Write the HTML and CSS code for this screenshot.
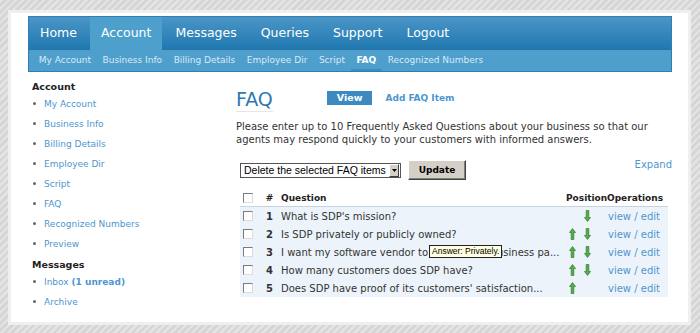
FILE: index.html
```html
<!DOCTYPE html>
<html lang="en">
<head>
  <meta charset="UTF-8">
  <title>FAQ</title>
  <link rel="stylesheet" href="styles.css">
</head>
<body>
  <div class="panel">
    <div class="nav">
      <ul class="menu">
        <li>Home</li>
        <li class="active">Account</li>
        <li>Messages</li>
        <li>Queries</li>
        <li>Support</li>
        <li>Logout</li>
      </ul>
      <ul class="submenu">
        <li>My Account</li>
        <li>Business Info</li>
        <li>Billing Details</li>
        <li>Employee Dir</li>
        <li>Script</li>
        <li class="active">FAQ</li>
        <li>Recognized Numbers</li>
      </ul>
    </div>

    <div class="layout">
      <div class="sidebar">
        <h3>Account</h3>
        <ul>
          <li><a href="#">My Account</a></li>
          <li><a href="#">Business Info</a></li>
          <li><a href="#">Billing Details</a></li>
          <li><a href="#">Employee Dir</a></li>
          <li><a href="#">Script</a></li>
          <li><a href="#">FAQ</a></li>
          <li><a href="#">Recognized Numbers</a></li>
          <li><a href="#">Preview</a></li>
        </ul>
        <h3 class="second">Messages</h3>
        <ul>
          <li><a href="#">Inbox <b>(1 unread)</b></a></li>
          <li><a href="#">Archive</a></li>
        </ul>
      </div>

      <div class="content">
        <div class="title-row">
          <h1>FAQ</h1>
          <span class="tab">View</span>
          <a class="add" href="#">Add FAQ Item</a>
        </div>
        <p class="intro">Please enter up to 10 Frequently Asked Questions about your business so that our agents may respond quickly to your customers with informed answers.</p>

        <div class="toolbar">
          <div class="select">
            <span class="select-text">Delete the selected FAQ items</span>
            <span class="select-arrow"><svg width="5" height="3" viewBox="0 0 5 3"><polygon points="0,0 5,0 2.5,3" fill="#000"/></svg></span>
          </div>
          <button class="update">Update</button>
          <a class="expand" href="#">Expand</a>
        </div>

        <table class="faq">
          <colgroup>
            <col class="c-check">
            <col class="c-num">
            <col class="c-question">
            <col class="c-pos">
            <col class="c-ops">
          </colgroup>
          <thead>
            <tr>
              <th class="check"><input type="checkbox"></th>
              <th class="num">#</th>
              <th class="question">Question</th>
              <th class="pos-head">Position</th>
              <th>Operations</th>
            </tr>
          </thead>
          <tbody>
            <tr>
              <td class="check"><input type="checkbox"></td>
              <td class="num">1</td>
              <td class="question">What is SDP's mission?</td>
              <td class="pos"><span class="arrows"><span class="slot"></span><svg class="arrow" width="7" height="12" viewBox="0 0 7 12"><polygon points="2.2,0.5 4.8,0.5 4.8,7.5 6.5,7.5 3.5,11.5 0.5,7.5 2.2,7.5"/></svg></span></td>
              <td class="ops"><a href="#">view</a> / <a href="#">edit</a></td>
            </tr>
            <tr>
              <td class="check"><input type="checkbox"></td>
              <td class="num">2</td>
              <td class="question">Is SDP privately or publicly owned?</td>
              <td class="pos"><span class="arrows"><svg class="arrow" width="7" height="12" viewBox="0 0 7 12"><polygon points="3.5,0.5 6.5,4.5 4.8,4.5 4.8,11.5 2.2,11.5 2.2,4.5 0.5,4.5"/></svg><svg class="arrow" width="7" height="12" viewBox="0 0 7 12"><polygon points="2.2,0.5 4.8,0.5 4.8,7.5 6.5,7.5 3.5,11.5 0.5,7.5 2.2,7.5"/></svg></span></td>
              <td class="ops"><a href="#">view</a> / <a href="#">edit</a></td>
            </tr>
            <tr>
              <td class="check"><input type="checkbox"></td>
              <td class="num">3</td>
              <td class="question has-tip">I want my software vendor to contact my business pa...<span class="tip">Answer: Privately.</span></td>
              <td class="pos"><span class="arrows"><svg class="arrow" width="7" height="12" viewBox="0 0 7 12"><polygon points="3.5,0.5 6.5,4.5 4.8,4.5 4.8,11.5 2.2,11.5 2.2,4.5 0.5,4.5"/></svg><svg class="arrow" width="7" height="12" viewBox="0 0 7 12"><polygon points="2.2,0.5 4.8,0.5 4.8,7.5 6.5,7.5 3.5,11.5 0.5,7.5 2.2,7.5"/></svg></span></td>
              <td class="ops"><a href="#">view</a> / <a href="#">edit</a></td>
            </tr>
            <tr>
              <td class="check"><input type="checkbox"></td>
              <td class="num">4</td>
              <td class="question">How many customers does SDP have?</td>
              <td class="pos"><span class="arrows"><svg class="arrow" width="7" height="12" viewBox="0 0 7 12"><polygon points="3.5,0.5 6.5,4.5 4.8,4.5 4.8,11.5 2.2,11.5 2.2,4.5 0.5,4.5"/></svg><svg class="arrow" width="7" height="12" viewBox="0 0 7 12"><polygon points="2.2,0.5 4.8,0.5 4.8,7.5 6.5,7.5 3.5,11.5 0.5,7.5 2.2,7.5"/></svg></span></td>
              <td class="ops"><a href="#">view</a> / <a href="#">edit</a></td>
            </tr>
            <tr>
              <td class="check"><input type="checkbox"></td>
              <td class="num">5</td>
              <td class="question">Does SDP have proof of its customers' satisfaction...</td>
              <td class="pos"><span class="arrows"><svg class="arrow" width="7" height="12" viewBox="0 0 7 12"><polygon points="3.5,0.5 6.5,4.5 4.8,4.5 4.8,11.5 2.2,11.5 2.2,4.5 0.5,4.5"/></svg><span class="slot"></span></span></td>
              <td class="ops"><a href="#">view</a> / <a href="#">edit</a></td>
            </tr>
          </tbody>
        </table>
      </div>
    </div>
  </div>
</body>
</html>
```

FILE: styles.css
```css
html, body {
  margin: 0;
  height: 333px;
  overflow: hidden;
}
body {
  font-family: "DejaVu Sans", Verdana, sans-serif;
  background: repeating-linear-gradient(135deg, #e3e3e3 0 2.5px, #d5d5d5 2.5px 5px);
}
a {
  color: #4d96cf;
  text-decoration: none;
}
.panel {
  margin: 10px 9px 0 8px;
  height: 315px;
  box-sizing: border-box;
  border: 3px solid #efefef;
  background: #fff;
  padding: 3px 16px 0 17px;
}

/* top navigation */
.nav {
  border: 1px solid #2f7fb4;
}
.menu {
  display: flex;
  margin: 0;
  padding: 0;
  list-style: none;
  height: 32px;
  background: linear-gradient(#4b95c6, #2079b1);
  border-bottom: 1px solid #2a72a4;
}
.menu li {
  padding: 0 11px;
  margin-right: 2px;
  line-height: 32px;
  font-size: 12.5px;
  color: #fff;
}
.menu li.active {
  background: #4d9fcc;
  height: 33px;
}
.submenu {
  display: flex;
  margin: 0;
  padding: 0 0 0 4px;
  list-style: none;
  height: 21px;
  background: #4e9fcc;
}
.submenu li {
  padding: 0 5.75px;
  line-height: 21px;
  font-size: 9px;
  color: #dce9f5;
}
.submenu li.active {
  color: #fff;
  font-weight: bold;
  box-shadow: inset 0 -2px #3f8cc1;
}

.layout {
  display: grid;
  grid-template-columns: 208px 1fr;
}

/* sidebar */
.sidebar h3 {
  margin: 8px 0 0 4px;
  font-size: 9.5px;
  line-height: 14px;
  color: #222;
}
.sidebar h3.second {
  margin-top: 4px;
}
.sidebar ul {
  list-style: none;
  margin: 0;
  padding: 0 0 0 16px;
}
.sidebar li {
  font-size: 9px;
  line-height: 20px;
}
.sidebar li::before {
  content: "";
  display: inline-block;
  width: 3px;
  height: 3px;
  border-radius: 50%;
  background: #666;
  margin: 0 8px 2px -11px;
  vertical-align: middle;
}

/* content */
.title-row {
  display: flex;
  align-items: flex-start;
  margin-top: 16px;
}
h1 {
  margin: 0;
  font-size: 19px;
  line-height: 22px;
  font-weight: normal;
  color: #2b78b4;
  padding-bottom: 1px;
  border-bottom: 1px solid #e6e6e6;
}
.tab {
  margin: 3px 0 0 54px;
  padding: 0 10px;
  line-height: 14px;
  background: #3d8ac0;
  color: #fff;
  font-weight: bold;
  font-size: 9.5px;
}
.add {
  margin: 3px 0 0 13px;
  line-height: 14px;
  font-size: 9px;
  font-weight: bold;
}
.intro {
  margin: 8px 0 0;
  font-size: 10px;
  line-height: 13px;
  color: #333;
}

.toolbar {
  display: flex;
  align-items: center;
  margin: 14px 0 0 4px;
  height: 20px;
}
.select {
  display: flex;
  align-items: center;
  box-sizing: border-box;
  width: 161px;
  height: 15px;
  border: 1px solid #555;
  background: #fff;
  font-family: "Liberation Sans", Arial, sans-serif;
  font-size: 10.5px;
  color: #000;
}
.select-text {
  padding-left: 3px;
}
.select-arrow {
  display: flex;
  align-items: center;
  justify-content: center;
  margin-left: auto;
  width: 8px;
  height: 11px;
  margin-right: 1px;
  background: #d4d0c8;
  border: 1px solid;
  border-color: #fff #404040 #404040 #fff;
}
.update {
  margin-left: 7px;
  width: 58px;
  height: 20px;
  padding: 0;
  background: #d4d0c8;
  border: 1px solid;
  border-color: #fff #404040 #404040 #fff;
  box-shadow: inset -1px -1px #808080;
  font-family: "DejaVu Sans", Verdana, sans-serif;
  font-weight: bold;
  font-size: 9px;
  color: #000;
}
.expand {
  margin-left: auto;
  align-self: flex-start;
  margin-top: -1px;
  font-size: 10px;
  line-height: 12px;
}

/* faq table */
.faq {
  margin: 10px 0 0 4px;
  width: 428px;
  border-collapse: collapse;
  table-layout: fixed;
}
.c-check { width: 21px; }
.c-num { width: 17px; }
.c-question { width: 285px; }
.c-pos { width: 44px; }
.c-ops { width: 61px; }
.faq th {
  height: 16px;
  padding: 0;
  text-align: left;
  font-size: 9px;
  color: #222;
  border-bottom: 1px solid #c9d3dd;
}
.faq td {
  height: 18px;
  padding: 0;
  font-size: 10px;
  color: #333;
  background: #edf3fa;
  white-space: nowrap;
  overflow: hidden;
}
.faq .check {
  padding-left: 3px;
}
.faq input {
  appearance: none;
  display: block;
  margin: 0;
  width: 10px;
  height: 10px;
  background: #fff;
  border: 1px solid;
  border-color: #7a7a7a #dcdcdc #dcdcdc #7a7a7a;
}
.faq .num {
  text-align: center;
  font-weight: bold;
}
.faq .question {
  padding-left: 3px;
}
.faq .pos-head {
  padding-left: 3px;
}
.faq .pos {
  padding-left: 6px;
}
.faq .ops {
  padding-left: 1px;
  color: #4d96cf;
}
.arrows {
  display: flex;
  gap: 8px;
}
.slot {
  width: 7px;
}
.arrow {
  display: block;
  fill: #52ad48;
  stroke: #2e7d2e;
  stroke-width: 0.7;
}
.faq td.has-tip {
  position: relative;
  overflow: visible;
}
.tip {
  position: absolute;
  left: 151px;
  top: 2px;
  padding: 0 2px;
  background: #ffffe1;
  border: 1px solid #222;
  font-family: "Liberation Sans", Arial, sans-serif;
  font-size: 8.5px;
  line-height: 11px;
  color: #000;
}
```
